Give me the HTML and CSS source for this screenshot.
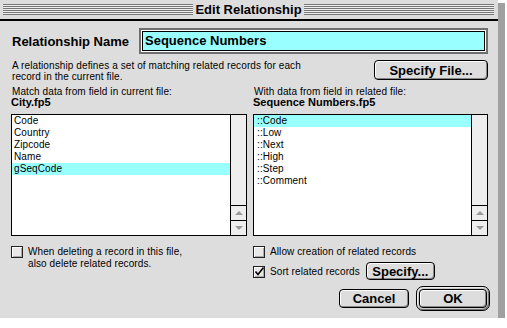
FILE: index.html
```html
<!DOCTYPE html>
<html>
    <head>
        <meta charset="utf-8">
        <title>Edit Relationship</title>
        <link rel="stylesheet" href="styles.css">
    </head>
    <body>
        <div class="window">
            <div class="titlebar">
                <span class="stripes"></span>
                <span class="title">Edit Relationship</span>
                <span class="stripes"></span>
            </div>
            <div class="content">
                <div class="name-row">
                    <span class="name-label">Relationship Name</span>
                    <div class="name-field"><div class="name-input">Sequence Numbers</div></div>
                </div>
                <div class="intro-row">
                    <p class="intro">A relationship defines a set of matching related records for each<br>record in the current file.</p>
                    <button type="button" class="btn btn-file">Specify File...</button>
                </div>
                <div class="columns">
                    <div class="col">
                        <p class="hint">Match data from field in current file:</p>
                        <p class="file">City.fp5</p>
                        <div class="list">
                            <ul class="items">
                                <li>Code</li>
                                <li>Country</li>
                                <li>Zipcode</li>
                                <li>Name</li>
                                <li class="selected">gSeqCode</li>
                            </ul>
                            <div class="scroll">
                                <div class="track"></div>
                                <div class="arrow"><span class="tri up"></span></div>
                                <div class="arrow"><span class="tri down"></span></div>
                            </div>
                        </div>
                        <div class="check-row">
                            <span class="box"></span>
                            <span>When deleting a record in this file,<br>also delete related records.</span>
                        </div>
                    </div>
                    <div class="col">
                        <p class="hint">With data from field in related file:</p>
                        <p class="file">Sequence Numbers.fp5</p>
                        <div class="list">
                            <ul class="items related">
                                <li class="selected">::Code</li>
                                <li>::Low</li>
                                <li>::Next</li>
                                <li>::High</li>
                                <li>::Step</li>
                                <li>::Comment</li>
                            </ul>
                            <div class="scroll">
                                <div class="track"></div>
                                <div class="arrow"><span class="tri up"></span></div>
                                <div class="arrow"><span class="tri down"></span></div>
                            </div>
                        </div>
                        <div class="check-row">
                            <span class="box"></span>
                            <span>Allow creation of related records</span>
                        </div>
                        <div class="sort-row">
                            <div class="check-row">
                                <span class="box">
                                    <svg width="10" height="10" viewBox="0 0 10 10"><path d="M1.5 4.5 L4 7.5 L9.5 0.5" fill="none" stroke="#000" stroke-width="1.6"/></svg>
                                </span>
                                <span>Sort related records</span>
                            </div>
                            <button type="button" class="btn btn-specify">Specify...</button>
                        </div>
                        <div class="actions">
                            <button type="button" class="btn btn-cancel">Cancel</button>
                            <div class="ring"><button type="button" class="btn btn-ok">OK</button></div>
                        </div>
                    </div>
                </div>
            </div>
        </div>
    </body>
</html>
```
FILE: styles.css
```css
body{
    margin: 0;
    background: #fff;
    font-family: "Liberation Sans", Arial, sans-serif;
    color: #000;
}
p{
    margin: 0;
}
.window{
    width: 498px;
    height: 318px;
    background: #ddd;
    box-shadow: 5px 5px 0 2px #a0a0a0;
}
.titlebar{
    display: flex;
    align-items: center;
    height: 19px;
    padding: 0 4px 0 3px;
    border-bottom: 2px solid #000;
}
.stripes{
    flex: 1;
    height: 11px;
    background: repeating-linear-gradient(to bottom, #777 0 1px, #eee 1px 2px);
}
.title{
    padding: 0 2px;
    font-size: 13px;
    font-weight: bold;
    line-height: 19px;
}
.content{
    padding: 7px 10px 0 11px;
}
.name-row{
    display: flex;
    align-items: center;
    justify-content: space-between;
}
.name-label{
    padding-left: 1px;
    font-size: 13px;
    font-weight: bold;
}
.name-field{
    width: 349px;
    height: 26px;
    box-sizing: border-box;
    border: 2px solid #6e6e6e;
    padding: 1px;
    background: #fff;
}
.name-input{
    height: 100%;
    box-sizing: border-box;
    border: 1px solid #000;
    background: #9ff;
    padding-left: 2px;
    font-size: 13px;
    font-weight: bold;
    line-height: 18px;
}
.intro-row{
    display: flex;
    justify-content: space-between;
    align-items: flex-start;
    margin-top: 6px;
}
.intro, .hint{
    padding-left: 1px;
    font-size: 10px;
    line-height: 11px;
    letter-spacing: .1px;
}
.btn{
    padding: 0;
    box-sizing: border-box;
    border: 1px solid #000;
    border-radius: 4px;
    background: #ddd;
    box-shadow: inset 1px 1px 0 #fff, inset -1px -1px 0 #888;
    font-family: inherit;
    font-size: 13px;
    font-weight: bold;
    line-height: 1;
    color: #000;
}
.btn-file{
    width: 114px;
    height: 20px;
}
.columns{
    display: grid;
    grid-template-columns: 236px 235px;
    column-gap: 6px;
    margin-top: 4px;
}
.file{
    font-size: 11px;
    font-weight: bold;
    line-height: 10px;
}
.list{
    display: flex;
    height: 122px;
    margin-top: 7px;
    box-sizing: border-box;
    border: 1px solid #000;
    background: #fff;
}
.items{
    flex: 1;
    margin: 0;
    padding: 0;
    list-style: none;
}
.items li{
    height: 12px;
    padding-left: 2px;
    font-size: 10px;
    line-height: 12px;
    letter-spacing: .1px;
}
.related li{
    padding-left: 3px;
}
.items .selected{
    background: #9ff;
}
.scroll{
    display: flex;
    flex-direction: column;
    width: 16px;
    box-sizing: border-box;
    border-left: 1px solid #000;
    background: #eee;
}
.track{
    flex: 1;
}
.arrow{
    display: flex;
    align-items: center;
    justify-content: center;
    height: 15px;
    box-sizing: border-box;
    border-top: 1px solid #000;
}
.tri{
    width: 0;
    height: 0;
    border-left: 4px solid transparent;
    border-right: 4px solid transparent;
}
.up{
    border-bottom: 4px solid #999;
}
.down{
    border-top: 4px solid #999;
}
.check-row{
    display: flex;
    align-items: flex-start;
    gap: 5px;
    margin-top: 10px;
    font-size: 10px;
    line-height: 12px;
    letter-spacing: .1px;
}
.box{
    flex: none;
    width: 12px;
    height: 12px;
    box-sizing: border-box;
    border: 1px solid #222;
    background: #e8e8e8;
    box-shadow: inset 1px 1px 0 #fff, inset -1px -1px 0 #aaa;
}
.box svg{
    display: block;
    overflow: visible;
}
.sort-row{
    display: flex;
    align-items: flex-end;
    margin-top: 4px;
}
.sort-row .check-row{
    margin: 0 0 2px;
}
.btn-specify{
    width: 69px;
    height: 18px;
    margin-left: 6px;
}
.actions{
    display: flex;
    justify-content: flex-end;
    align-items: center;
    gap: 7px;
    margin-top: 6px;
    margin-right: -2px;
}
.btn-cancel{
    width: 70px;
    height: 19px;
}
.ring{
    display: flex;
    padding: 2px;
    border: 1px solid #000;
    border-radius: 7px;
    background: #c8c8c8;
    box-shadow: inset 1px 1px 0 #eee, inset -1px -1px 0 #777;
}
.btn-ok{
    width: 68px;
    height: 19px;
}
```
